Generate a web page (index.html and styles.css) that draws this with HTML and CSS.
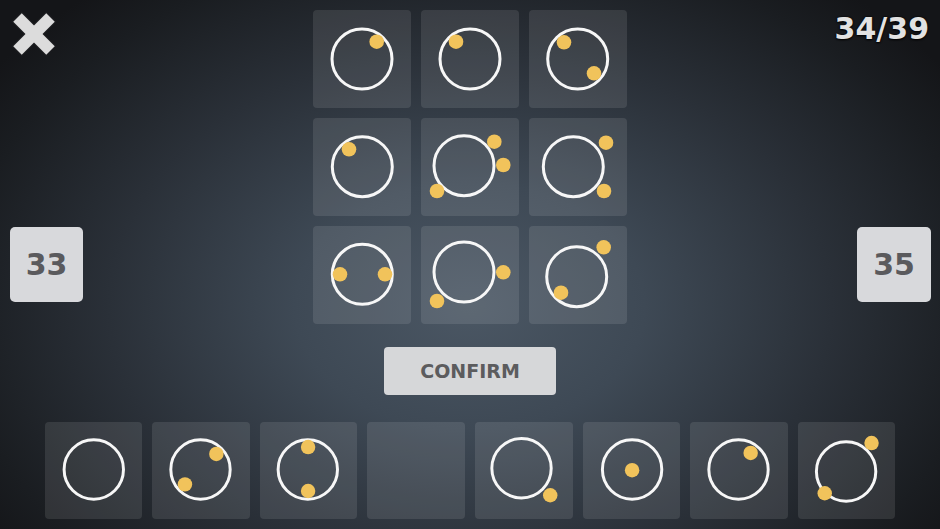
FILE: index.html
```html
<!DOCTYPE html>
<html>
<head>
<meta charset="utf-8">
<link rel="stylesheet" href="styles.css">
</head>
<body>
<div class="screen">
  <div class="upper">
    <div class="side side-left">
      <svg class="close" width="48" height="48" viewBox="0 0 48 48">
        <g stroke-linecap="butt">
          <line x1="6.5" y1="6.5" x2="41.5" y2="41.5" stroke="#1a1b1e" stroke-width="15"/>
          <line x1="41.5" y1="6.5" x2="6.5" y2="41.5" stroke="#1a1b1e" stroke-width="15"/>
          <line x1="7.5" y1="7.5" x2="40.5" y2="40.5" stroke="#dcdcdc" stroke-width="12"/>
          <line x1="40.5" y1="7.5" x2="7.5" y2="40.5" stroke="#dcdcdc" stroke-width="12"/>
        </g>
      </svg>
      <div class="nav-btn nav-left">33</div>
    </div>
    <div class="center">
      <div class="pgrid">
        <div class="cell"><svg viewBox="0 0 98 98"><circle class="ring" cx="49" cy="49" r="30"/><circle class="dot" cx="63.7" cy="31.7" r="7.3"/></svg></div>
        <div class="cell"><svg viewBox="0 0 98 98"><circle class="ring" cx="49" cy="49" r="30"/><circle class="dot" cx="35" cy="31.7" r="7.3"/></svg></div>
        <div class="cell"><svg viewBox="0 0 98 98"><circle class="ring" cx="48.7" cy="49" r="30"/><circle class="dot" cx="35" cy="32.3" r="7.3"/><circle class="dot" cx="65" cy="63.3" r="7.3"/></svg></div>
        <div class="cell"><svg viewBox="0 0 98 98"><circle class="ring" cx="49.3" cy="48.7" r="30"/><circle class="dot" cx="36" cy="31.3" r="7.3"/></svg></div>
        <div class="cell"><svg viewBox="0 0 98 98"><circle class="ring" cx="43" cy="47.7" r="30"/><circle class="dot" cx="73.3" cy="23.7" r="7.3"/><circle class="dot" cx="82.3" cy="47" r="7.3"/><circle class="dot" cx="16" cy="73" r="7.3"/></svg></div>
        <div class="cell"><svg viewBox="0 0 98 98"><circle class="ring" cx="44.3" cy="48.7" r="30"/><circle class="dot" cx="77" cy="24.7" r="7.3"/><circle class="dot" cx="75" cy="73" r="7.3"/></svg></div>
        <div class="cell"><svg viewBox="0 0 98 98"><circle class="ring" cx="49.3" cy="48.3" r="30"/><circle class="dot" cx="27" cy="48.3" r="7.3"/><circle class="dot" cx="72" cy="48.3" r="7.3"/></svg></div>
        <div class="cell"><svg viewBox="0 0 98 98"><circle class="ring" cx="43" cy="46" r="30"/><circle class="dot" cx="82.3" cy="46.3" r="7.3"/><circle class="dot" cx="16" cy="75" r="7.3"/></svg></div>
        <div class="cell"><svg viewBox="0 0 98 98"><circle class="ring" cx="47.7" cy="50.7" r="30"/><circle class="dot" cx="74.7" cy="21.3" r="7.3"/><circle class="dot" cx="32" cy="66.7" r="7.3"/></svg></div>
      </div>
      <div class="confirm">CONFIRM</div>
    </div>
    <div class="side side-right">
      <div class="counter">34/39</div>
      <div class="nav-btn nav-right">35</div>
    </div>
  </div>
  <div class="tray">
    <div class="cell tcell"><svg viewBox="0 0 98 98"><circle class="ring" cx="49" cy="48" r="30"/></svg></div>
    <div class="cell tcell"><svg viewBox="0 0 98 98"><circle class="ring" cx="48.7" cy="48" r="30"/><circle class="dot" cx="64.7" cy="32.3" r="7.3"/><circle class="dot" cx="33" cy="63" r="7.3"/></svg></div>
    <div class="cell tcell"><svg viewBox="0 0 98 98"><circle class="ring" cx="48" cy="48" r="30"/><circle class="dot" cx="48.3" cy="25.3" r="7.3"/><circle class="dot" cx="48.3" cy="69.7" r="7.3"/></svg></div>
    <div class="cell tcell"></div>
    <div class="cell tcell"><svg viewBox="0 0 98 98"><circle class="ring" cx="46.7" cy="46.7" r="30"/><circle class="dot" cx="75.7" cy="74" r="7.3"/></svg></div>
    <div class="cell tcell"><svg viewBox="0 0 98 98"><circle class="ring" cx="49.3" cy="48" r="30"/><circle class="dot" cx="49.3" cy="48.7" r="7.3"/></svg></div>
    <div class="cell tcell"><svg viewBox="0 0 98 98"><circle class="ring" cx="48.7" cy="48" r="30"/><circle class="dot" cx="61" cy="31.3" r="7.3"/></svg></div>
    <div class="cell tcell"><svg viewBox="0 0 98 98"><circle class="ring" cx="48.3" cy="50" r="30"/><circle class="dot" cx="74" cy="21.3" r="7.3"/><circle class="dot" cx="26.7" cy="72" r="7.3"/></svg></div>
  </div>
</div>
</body>
</html>
```

FILE: styles.css
```css
html, body {
  margin: 0;
  padding: 0;
}
body {
  font-family: "DejaVu Sans", "Liberation Sans", sans-serif;
  background: #15171b;
}
.screen {
  width: 940px;
  height: 529px;
  overflow: hidden;
  display: flex;
  flex-direction: column;
  background: radial-gradient(ellipse 62% 78% at 50% 58%, #4b5764 0%, #3e4955 30%, #2a3038 62%, #1a1d21 88%, #141518 100%);
}
.upper {
  height: 422px;
  display: flex;
  justify-content: space-between;
}
.side {
  width: 313px;
  display: flex;
  flex-direction: column;
}
.side-left {
  align-items: flex-start;
  padding-left: 10px;
  box-sizing: border-box;
}
.side-right {
  align-items: flex-end;
  padding-right: 9px;
  box-sizing: border-box;
}
.close {
  display: block;
  margin-top: 10px;
  margin-left: 0px;
}
.nav-btn {
  background: #d8d9dc;
  border-radius: 5px;
  color: #5a5a5d;
  font-weight: bold;
  font-size: 30px;
  display: flex;
  align-items: center;
  justify-content: center;
}
.nav-left {
  width: 73px;
  height: 75px;
  margin-top: 169px;
}
.nav-right {
  width: 74px;
  height: 75px;
  margin-top: 183px;
}
.counter {
  margin-top: 14px;
  margin-right: 2px;
  font-size: 30px;
  line-height: 30px;
  height: 30px;
  font-weight: bold;
  color: #e2e2e2;
  text-shadow: 0 0 2px #000, 0 1px 2px #000;
}
.center {
  width: 314px;
  display: flex;
  flex-direction: column;
  align-items: center;
}
.pgrid {
  margin-top: 10px;
  display: grid;
  grid-template-columns: repeat(3, 98px);
  grid-auto-rows: 98px;
  gap: 10px;
}
.cell {
  background: rgba(255, 255, 255, 0.1);
  border-radius: 4px;
}
.cell svg {
  display: block;
  width: 100%;
  height: 100%;
}
.ring {
  fill: none;
  stroke: #f7f7f7;
  stroke-width: 3;
}
.dot {
  fill: #f1c35b;
}
.confirm {
  margin-top: 23px;
  width: 172px;
  height: 48px;
  background: #d6d7d9;
  border-radius: 4px;
  color: #5c5c5e;
  font-weight: bold;
  font-size: 19px;
  display: flex;
  align-items: center;
  justify-content: center;
}
.tray {
  display: flex;
  justify-content: center;
  gap: 10px;
}
.tcell {
  width: 97.6px;
  height: 97px;
}
```
